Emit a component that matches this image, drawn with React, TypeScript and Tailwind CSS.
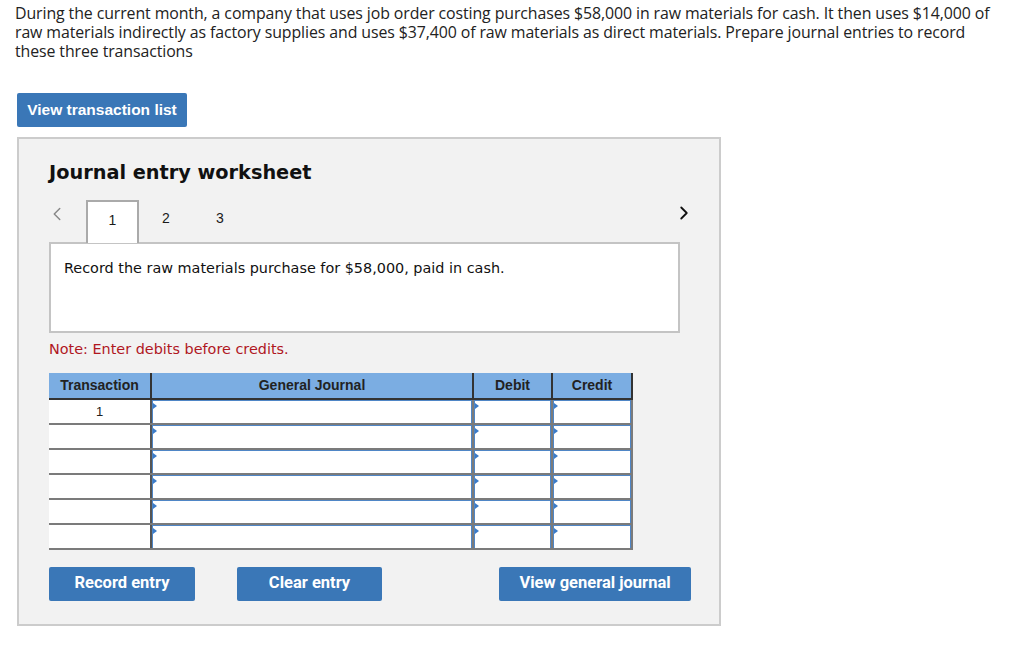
import { ChevronLeft, ChevronRight } from "lucide-react";

const intro = [
  "During the current month, a company that uses job order costing purchases $58,000 in raw materials for cash. It then uses $14,000 of",
  "raw materials indirectly as factory supplies and uses $37,400 of raw materials as direct materials. Prepare journal entries to record",
  "these three transactions",
];

const rows = [1, 2, 3, 4, 5, 6];

const InputCell = () => (
  <td className="p-0 h-[25px] border-b-2 border-[#7b7b7b] border-r-2 border-r-[#7b7b7b]">
    <div className="relative h-full border-l border-t border-r border-[#4f86c6] bg-white">
      <span className="absolute left-0 top-[2px] w-0 h-0 border-y-[3px] border-y-transparent border-l-[4px] border-l-[#3b7bc8]" />
    </div>
  </td>
);

export default function App() {
  return (
    <div className="min-h-[663px] bg-white pt-[4px] pl-[15px] text-[#1a1a1a]">
      <div className="font-['Open_Sans',sans-serif] text-[15.9px] leading-[19px] tracking-[-0.1px] text-[#222]">
        {intro.map((line) => (
          <div key={line} className="whitespace-nowrap">{line}</div>
        ))}
      </div>

      <button className="mt-[32px] ml-[2px] h-[34px] w-[170px] rounded-[2px] bg-[#3a77b7] text-white font-['Liberation_Sans',sans-serif] font-bold text-[15.5px]">
        View transaction list
      </button>

      <div className="mt-[10px] ml-[2px] w-[704px] h-[489px] border-2 border-[#cccccc] bg-[#f2f2f2] pl-[30px] pt-[22px]">
        <h2 className="font-['DejaVu_Sans',sans-serif] font-bold text-[19.3px] leading-[24px] text-[#111]">
          Journal entry worksheet
        </h2>

        <div className="mt-[14px] flex items-end w-[646px] h-[43px]">
          <div className="w-[37px] h-full flex items-center pb-[14px]">
            <ChevronLeft size={22} strokeWidth={1.6} className="-ml-[3px] text-[#888]" />
          </div>
          <div className="w-[53px] h-[43px] border-2 border-b-0 border-[#aaaaaa] bg-white flex justify-center pt-[8px] font-['Liberation_Sans',sans-serif] text-[14px] relative top-[1px] z-10">
            1
          </div>
          <div className="w-[54px] h-full flex justify-center pt-[9px] font-['Liberation_Sans',sans-serif] text-[14px]">2</div>
          <div className="w-[54px] h-full flex justify-center pt-[9px] font-['Liberation_Sans',sans-serif] text-[14px]">3</div>
          <div className="flex-1 h-full flex justify-end pt-[3px]">
            <ChevronRight size={22} strokeWidth={2} className="text-[#111]" />
          </div>
        </div>

        <div className="w-[631px] h-[91px] border-2 border-[#c4c4c4] bg-white pl-[13px] pt-[14px] font-['DejaVu_Sans',sans-serif] text-[14.4px] text-[#111]">
          Record the raw materials purchase for $58,000, paid in cash.
        </div>

        <p className="mt-[6px] font-['DejaVu_Sans',sans-serif] text-[14.4px] text-[#b0171f]">
          Note: Enter debits before credits.
        </p>

        <table className="mt-[12px] border-collapse table-fixed w-[583px] font-['Liberation_Sans',sans-serif] text-[14px]">
          <colgroup>
            <col className="w-[102px]" />
            <col className="w-[322px]" />
            <col className="w-[79px]" />
            <col className="w-[80px]" />
          </colgroup>
          <thead>
            <tr className="h-[26px] bg-[#7badE2] font-bold text-[#222]">
              <th className="border-r-2 border-[#333] border-b-2 border-b-[#333]">Transaction</th>
              <th className="border-r-2 border-[#333] border-b-2 border-b-[#333]">General Journal</th>
              <th className="border-r-2 border-[#333] border-b-2 border-b-[#333]">Debit</th>
              <th className="border-r-2 border-[#333] border-b-2 border-b-[#333]">Credit</th>
            </tr>
          </thead>
          <tbody>
            {rows.map((r) => (
              <tr key={r}>
                <td className="h-[25px] p-0 bg-white border-b-2 border-[#7b7b7b] border-r-2 border-r-[#555] text-center align-top pt-[2px] text-[13px] text-[#222]">
                  {r === 1 ? "1" : ""}
                </td>
                <InputCell />
                <InputCell />
                <InputCell />
              </tr>
            ))}
          </tbody>
        </table>

        <div className="mt-[17px] flex w-[642px] font-['Roboto',sans-serif] font-bold text-[16.5px] text-white">
          <button className="w-[146px] h-[34px] rounded-[2px] bg-[#3a77b7]">Record entry</button>
          <button className="ml-[42px] w-[145px] h-[34px] rounded-[2px] bg-[#3a77b7]">Clear entry</button>
          <button className="ml-auto w-[192px] h-[34px] rounded-[2px] bg-[#3a77b7]">View general journal</button>
        </div>
      </div>
    </div>
  );
}
